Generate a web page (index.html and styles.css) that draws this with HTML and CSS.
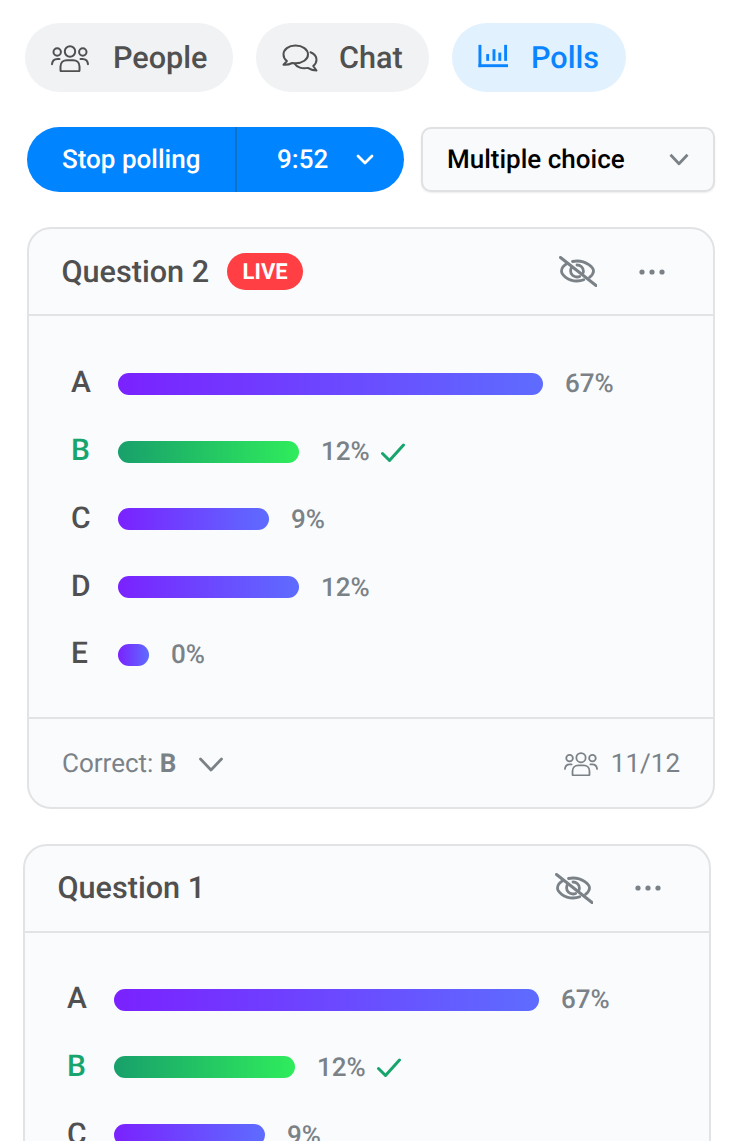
FILE: index.html
```html
<!DOCTYPE html>
<html lang="en">
<head>
<meta charset="utf-8">
<title>Polls</title>
<link rel="stylesheet" href="styles.css">
</head>
<body>
<svg class="defs" width="0" height="0" aria-hidden="true">
  <defs>
    <symbol id="people" viewBox="0 0 38 28">
      <g fill="none" stroke="currentColor" stroke-width="2" stroke-linecap="round" stroke-linejoin="round">
        <circle cx="19" cy="7.5" r="5.2"/>
        <circle cx="6.2" cy="8" r="3.7"/>
        <circle cx="31.8" cy="8" r="3.7"/>
        <path d="M9.5 26.3v-3.8c0-4 3-6.3 6.4-6.3h6.2c3.4 0 6.4 2.3 6.4 6.3v3.8c0 .6-.4 1-1 1H10.500c-.6 0-1-.4-1-1z"/>
        <path d="M1 20.200c.3-3.300 2.500-5.200 5.500-5.200h2"/>
        <path d="M37 20.200c-.3-3.300-2.500-5.200-5.500-5.200h-2"/>
      </g>
    </symbol>
    <symbol id="eye-off" viewBox="0 0 38 31">
      <g fill="none" stroke="currentColor" stroke-linecap="round" stroke-linejoin="round">
        <path stroke-width="2.800" d="M8 7.500C4.500 9.500 2.500 12.500 2.500 15c0 3.500 6 10 15.500 10 2.500 0 4.800-.4 6.800-1.200"/>
        <path stroke-width="2.800" d="M13.500 5.500c1.600-.3 3-.5 4.500-.5 9.500 0 16.500 6.500 16.500 10 0 2-1.400 4.300-4 6.300"/>
        <path stroke-width="2.800" d="M12.500 11.500c-.6 1-.9 2.200-.9 3.500 0 3.300 2.900 6 6.400 6 1 0 1.900-.2 2.700-.6"/>
        <path stroke-width="2.800" d="M18 9c3.500 0 6.400 2.700 6.400 6 0 .6-.1 1.200-.3 1.700"/>
        <path stroke-width="3" d="M1.500 1.500l35.500 28"/>
      </g>
    </symbol>
    <symbol id="check" viewBox="0 0 24 20">
      <path d="M1.500 10.500l7 7L22.500 2" fill="none" stroke="currentColor" stroke-width="3" stroke-linecap="round" stroke-linejoin="round"/>
    </symbol>
    <symbol id="more" viewBox="0 0 26 6">
      <circle cx="3" cy="3" r="2.600" fill="currentColor"/>
      <circle cx="13" cy="3" r="2.600" fill="currentColor"/>
      <circle cx="23" cy="3" r="2.600" fill="currentColor"/>
    </symbol>
  </defs>
</svg>

<main class="page">
  <nav class="tabs">
    <button class="tab">
      <svg class="tab-icon icon-people"><use href="#people"/></svg>
      <span class="tab-text">People</span>
    </button>
    <button class="tab tab-chat">
      <svg class="tab-icon icon-chat" viewBox="0 0 36 28">
        <g fill="none" stroke="currentColor" stroke-width="2" stroke-linecap="round" stroke-linejoin="round">
          <path d="M13.500 1.500C6.500 1.500 1.500 5.500 1.500 10.500c0 2.600 1.300 4.900 3.400 6.600L1.500 20.800c3 .2 6.300-.5 8.700-1.800 1.100.2 2.200.3 3.300.3 7 0 12.500-3.800 12.500-8.800S20.500 1.500 13.500 1.500z"/>
          <path d="M28.500 8.300c3.700 1.500 6 4.300 6 7.500 0 2.400-1.300 4.600-3.300 6.200l3.300 4.500c-3.200 0-6.300-1-8.700-2.600-5.500 1.300-11-.6-13.300-4.400"/>
        </g>
      </svg>
      <span class="tab-text">Chat</span>
    </button>
    <button class="tab tab-active">
      <svg class="tab-icon icon-polls" viewBox="0 0 32 24">
        <g fill="currentColor">
          <rect x="0.500" y="0.500" width="3" height="23"/>
          <rect x="0.500" y="20.500" width="30.500" height="3"/>
          <rect x="8.500" y="10" width="3" height="7"/>
          <rect x="15" y="5" width="3" height="12"/>
          <rect x="21" y="8.500" width="3" height="8.500"/>
          <rect x="27" y="0.500" width="3" height="16.500"/>
        </g>
      </svg>
      <span class="tab-text">Polls</span>
    </button>
  </nav>

  <section class="controls">
    <div class="stop">
      <span class="stop-label">Stop polling</span>
      <span class="stop-time">
        <span>9:52</span>
        <svg class="stop-chevron" viewBox="0 0 18 11"><path d="M2 2l7 7 7-7" fill="none" stroke="currentColor" stroke-width="2.800" stroke-linecap="round" stroke-linejoin="round"/></svg>
      </span>
    </div>
    <div class="select">
      <span>Multiple choice</span>
      <svg class="select-chevron" viewBox="0 0 20 13"><path d="M1.500 1.800L10 10.800l8.500-9" fill="none" stroke="currentColor" stroke-width="2.800" stroke-linejoin="round"/></svg>
    </div>
  </section>

  <article class="card card-live">
    <header class="card-head">
      <h2 class="card-title">Question 2</h2>
      <span class="live">LIVE</span>
      <svg class="eye"><use href="#eye-off"/></svg>
      <svg class="more"><use href="#more"/></svg>
    </header>
    <div class="card-body">
      <div class="row"><span class="letter">A</span><span class="bar w-a"></span><span class="pct">67%</span></div>
      <div class="row row-correct"><span class="letter">B</span><span class="bar w-b"></span><span class="pct">12%</span><svg class="check"><use href="#check"/></svg></div>
      <div class="row"><span class="letter">C</span><span class="bar w-c"></span><span class="pct">9%</span></div>
      <div class="row"><span class="letter">D</span><span class="bar w-b"></span><span class="pct">12%</span></div>
      <div class="row"><span class="letter">E</span><span class="bar w-e"></span><span class="pct">0%</span></div>
    </div>
    <footer class="card-foot">
      <span class="correct">Correct: <b>B</b></span>
      <svg class="foot-chevron" viewBox="0 0 24 15"><path d="M1.500 2l10.500 11L22.500 2" fill="none" stroke="currentColor" stroke-width="2.800" stroke-linecap="round" stroke-linejoin="round"/></svg>
      <svg class="foot-people"><use href="#people"/></svg>
      <span class="count">11/12</span>
    </footer>
  </article>

  <article class="card card-past">
    <header class="card-head">
      <h2 class="card-title">Question 1</h2>
      <svg class="eye"><use href="#eye-off"/></svg>
      <svg class="more"><use href="#more"/></svg>
    </header>
    <div class="card-body card-body-past">
      <div class="row"><span class="letter">A</span><span class="bar w-a"></span><span class="pct">67%</span></div>
      <div class="row row-correct"><span class="letter">B</span><span class="bar w-b"></span><span class="pct">12%</span><svg class="check"><use href="#check"/></svg></div>
      <div class="row"><span class="letter">C</span><span class="bar w-c"></span><span class="pct">9%</span></div>
    </div>
  </article>
</main>
</body>
</html>
```

FILE: styles.css
```css
* { box-sizing: border-box; }
html, body { margin: 0; padding: 0; background: #fff; }
body { font-family: Roboto, "Liberation Sans", sans-serif; text-rendering: geometricPrecision; }
.defs { position: absolute; }
.page { width: 747px; height: 1141px; overflow: hidden; padding-top: 23px; }

.tabs { display: flex; gap: 23px; padding-left: 25px; }
.tab {
  display: flex; align-items: center; height: 69px; width: 208px;
  padding: 0 0 0 26px; border: 0; border-radius: 35px;
  background: #f1f2f4; color: #505050;
  font: 460 30.600px Roboto, sans-serif;
  text-rendering: geometricPrecision;
}
.tab-text { margin-top: 1px; }
.tab-chat { width: 173px; }
.tab-active { width: 174px; background: #e2f1fe; color: #0a84ff; }
.tab-icon { flex: none; display: block; }
.icon-people { width: 38px; height: 28px; margin-right: 24px; }
.icon-chat { width: 36px; height: 28px; margin-right: 21px; }
.icon-polls { width: 31px; height: 24px; margin-right: 22px; margin-top: -3px; }

.controls { display: flex; margin-top: 35px; padding-left: 27px; gap: 17px; }
.stop {
  display: flex; width: 377px; height: 65px; border-radius: 33px;
  background: #0084ff; color: #fff; font-size: 26px; font-weight: 500;
}
.stop-label { width: 210px; padding-left: 35px; line-height: 66px; border-right: 2px solid #0f6fc9; }
.stop-time { flex: 1; display: flex; align-items: center; padding-left: 40px; gap: 28px; }
.stop-chevron { width: 18px; height: 11px; display: block; }
.select {
  display: flex; align-items: center; justify-content: space-between;
  width: 294px; height: 65px; padding: 0 24px 0 24px;
  background: #f9fafc; border: 2px solid #e0e1e3; border-radius: 10px;
  box-shadow: 0 1px 2px rgba(0,0,0,.08);
  color: #000; font-size: 26px; font-weight: 500;
}
.select-chevron { width: 20px; height: 13px; color: #7b8287; display: block; }

.card {
  width: 688px; background: #fafbfd;
  border: 2px solid #e2e3e5; border-radius: 24px;
}
.card-live { margin: 35px 0 35px 27px; }
.card-past { margin-left: 23px; }
.card-head {
  display: flex; align-items: center; height: 87px;
  padding: 0 33px 0 32.500px; border-bottom: 2px solid #e2e3e5;
}
.card-title { margin: 1px 0 0; font-size: 30.600px; font-weight: 460; color: #505050; }
.live {
  margin-left: 18px; width: 76px; height: 37px; border-radius: 19px;
  background: #ff3f43; color: #fff; font-size: 22px; font-weight: 700;
  line-height: 39px; text-align: center;
}
.eye { width: 38px; height: 31px; margin-left: auto; color: #7b8287; flex: none; }
.more { width: 26px; height: 6px; margin-left: 42px; margin-right: 15px; color: #7b8287; flex: none; }

.card-body { padding: 34px 33px 28px 42px; }
.card-body-past { padding-top: 33px; }
.row { display: flex; align-items: center; height: 67.750px; }
.letter { width: 47px; margin-top: -2px; font-size: 30px; font-weight: 460; color: #505050; }
.bar {
  display: block; height: 22px; border-radius: 11px;
  background: linear-gradient(90deg, #7a22ff, #5e6cff);
}
.w-a { width: 425px; }
.w-b { width: 181px; }
.w-c { width: 151px; }
.w-e { width: 31px; }
.pct { margin: 1px 0 0 22px; font-size: 26px; font-weight: 460; color: #7b8287; }
.row-correct .letter { color: #18a56d; }
.row-correct .bar { background: linear-gradient(90deg, #18a06b, #2fec5c); }
.check { width: 24px; height: 20px; margin-left: 11px; margin-top: 2px; color: #18a56d; flex: none; }

.card-foot {
  display: flex; align-items: center; height: 90px;
  padding: 0 33px; border-top: 2px solid #e2e3e5;
  color: #7b8287; font-size: 26px;
}
.correct { margin-top: 2px; }
.correct b { font-weight: 700; }
.foot-chevron { width: 24px; height: 15px; margin-left: 22.500px; margin-top: 3px; }
.foot-people { width: 34px; height: 25px; margin-left: auto; margin-right: 13px; margin-top: 2px; }
.count { margin-top: 2px; }
```
